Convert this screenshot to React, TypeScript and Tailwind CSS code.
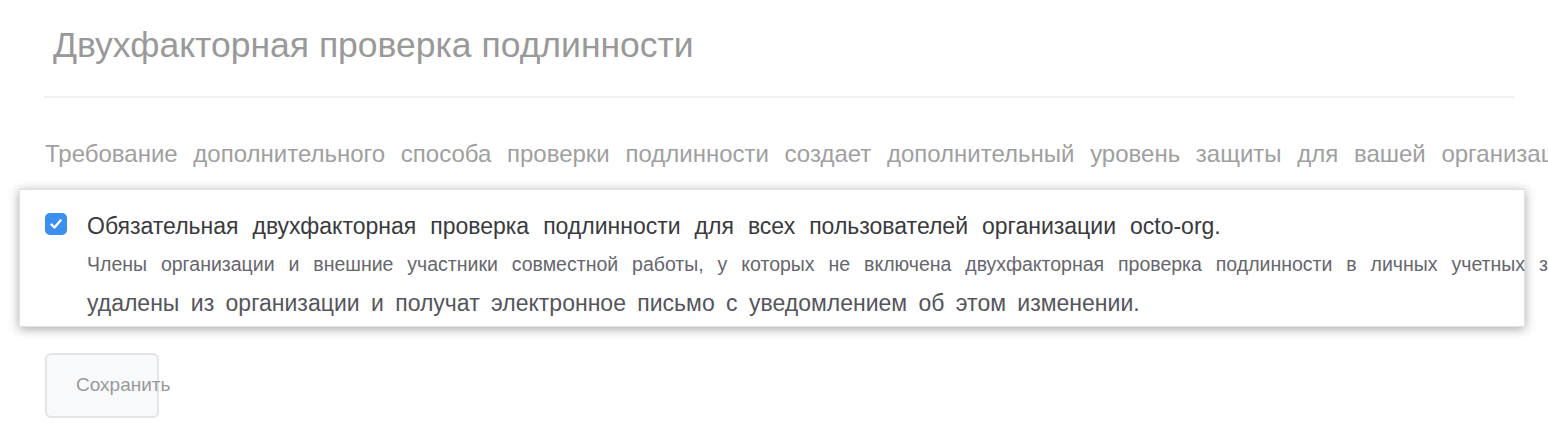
export default function App() {
  return (
    <div
      className="w-[1548px] h-[434px] bg-white overflow-hidden"
      style={{ fontFamily: '"Liberation Sans", Arial, sans-serif' }}
    >
      <div className="pl-[44px] pr-[34px] pt-[22px]">
        <h1 className="pl-[9px] text-[35.5px] leading-[46px] text-[#999999] font-normal">
          Двухфакторная проверка подлинности
        </h1>
        <div className="mt-[28px] h-[2px] bg-[#f0f0f0]" />
        <p className="mt-[42px] pl-px text-[24px] leading-[28px] text-[#a0a0a0] whitespace-nowrap [word-spacing:9px]">
          Требование дополнительного способа проверки подлинности создает дополнительный уровень защиты для вашей организации.
        </p>
      </div>

      <div className="ml-[19px] mt-[21px] w-[1506px] h-[138px] bg-white border border-[#e2e2e2] shadow-[0_2px_10px_rgba(0,0,0,0.35)] pt-[22px] pl-[25px] flex gap-[20px]">
        <div className="shrink-0 w-[22px] h-[22px] rounded-[5px] bg-[#3b8ff0] flex items-center justify-center mt-[1px]">
          <svg viewBox="0 0 16 16" className="w-[16px] h-[16px]">
            <path
              d="M3.5 8.5 L6.5 11.5 L12.5 4.5"
              fill="none"
              stroke="white"
              strokeWidth="2.4"
              strokeLinecap="round"
              strokeLinejoin="round"
            />
          </svg>
        </div>
        <div className="whitespace-nowrap">
          <div className="text-[23px] leading-[28px] text-[#3a3a3e] [word-spacing:7.6px]">
            Обязательная двухфакторная проверка подлинности для всех пользователей организации octo-org.
          </div>
          <div className="mt-[13px] text-[19.5px] leading-[22px] text-[#66666e] [word-spacing:8.5px]">
            Члены организации и внешние участники совместной работы, у которых не включена двухфакторная проверка подлинности в личных учетных записях, будут
          </div>
          <div className="mt-[14px] text-[23px] leading-[28px] text-[#55555c] [word-spacing:5px]">
            удалены из организации и получат электронное письмо с уведомлением об этом изменении.
          </div>
        </div>
      </div>

      <div className="pl-[45px] mt-[26px]">
        <button className="w-[114px] h-[65px] rounded-[6px] border-2 border-[#e4e4e6] bg-[#f8f9fb] pl-[29px] text-left text-[19px] text-[#9a9a9a] whitespace-nowrap">
          Сохранить
        </button>
      </div>
    </div>
  );
}
